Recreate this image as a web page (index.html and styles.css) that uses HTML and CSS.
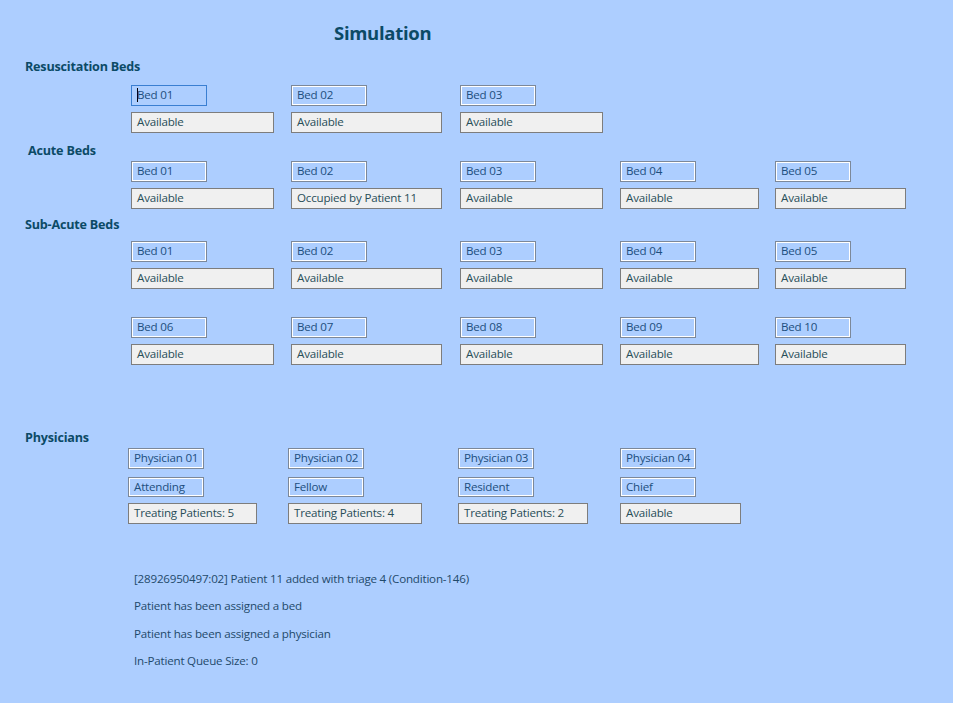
FILE: index.html
```html
<!DOCTYPE html>
<html lang="en">
<head>
<meta charset="utf-8">
<title>Simulation</title>
<link rel="stylesheet" href="styles.css">
</head>
<body>
<main class="sim">
  <h1 class="title">Simulation</h1>

  <h2 class="section">Resuscitation Beds</h2>
  <div class="bed-grid">
    <div class="bed"><div class="box name focused"><span class="caret"></span>Bed 01</div><div class="box status">Available</div></div>
    <div class="bed"><div class="box name">Bed 02</div><div class="box status">Available</div></div>
    <div class="bed"><div class="box name">Bed 03</div><div class="box status">Available</div></div>
  </div>

  <h2 class="section section-acute">Acute Beds</h2>
  <div class="bed-grid grid-tight">
    <div class="bed"><div class="box name">Bed 01</div><div class="box status">Available</div></div>
    <div class="bed"><div class="box name">Bed 02</div><div class="box status">Occupied by Patient 11</div></div>
    <div class="bed"><div class="box name">Bed 03</div><div class="box status">Available</div></div>
    <div class="bed"><div class="box name">Bed 04</div><div class="box status">Available</div></div>
    <div class="bed"><div class="box name">Bed 05</div><div class="box status">Available</div></div>
  </div>

  <h2 class="section section-sub">Sub-Acute Beds</h2>
  <div class="bed-grid grid-sub">
    <div class="bed"><div class="box name">Bed 01</div><div class="box status">Available</div></div>
    <div class="bed"><div class="box name">Bed 02</div><div class="box status">Available</div></div>
    <div class="bed"><div class="box name">Bed 03</div><div class="box status">Available</div></div>
    <div class="bed"><div class="box name">Bed 04</div><div class="box status">Available</div></div>
    <div class="bed"><div class="box name">Bed 05</div><div class="box status">Available</div></div>
    <div class="bed"><div class="box name">Bed 06</div><div class="box status">Available</div></div>
    <div class="bed"><div class="box name">Bed 07</div><div class="box status">Available</div></div>
    <div class="bed"><div class="box name">Bed 08</div><div class="box status">Available</div></div>
    <div class="bed"><div class="box name">Bed 09</div><div class="box status">Available</div></div>
    <div class="bed"><div class="box name">Bed 10</div><div class="box status">Available</div></div>
  </div>

  <h2 class="section section-phys">Physicians</h2>
  <div class="phys-grid">
    <div class="phys"><div class="box name">Physician 01</div><div class="box role">Attending</div><div class="box status">Treating Patients: 5</div></div>
    <div class="phys"><div class="box name">Physician 02</div><div class="box role">Fellow</div><div class="box status">Treating Patients: 4</div></div>
    <div class="phys"><div class="box name">Physician 03</div><div class="box role">Resident</div><div class="box status">Treating Patients: 2</div></div>
    <div class="phys"><div class="box name">Physician 04</div><div class="box role">Chief</div><div class="box status">Available</div></div>
  </div>

  <div class="log">
    <p>[28926950497:02] Patient 11 added with triage 4 (Condition-146)</p>
    <p>Patient has been assigned a bed</p>
    <p>Patient has been assigned a physician</p>
    <p>In-Patient Queue Size: 0</p>
  </div>
</main>
</body>
</html>
```

FILE: styles.css
```css
html, body {
  margin: 0;
  padding: 0;
}

body {
  background: #adceff;
  width: 953px;
  height: 703px;
  overflow: hidden;
  font-family: "Open Sans", "Noto Sans", sans-serif;
  font-size: 11.6px;
  letter-spacing: -0.2px;
}

.sim {
  display: flex;
  flex-direction: column;
  align-items: flex-start;
}

.title {
  margin: 21px 0 0 334px;
  font-size: 18.5px;
  letter-spacing: -0.3px;
  line-height: 24px;
  font-weight: 700;
  color: #0b4a66;
}

.section {
  margin: 14px 0 0 25px;
  font-size: 12.6px;
  letter-spacing: -0.2px;
  line-height: 16px;
  font-weight: 700;
  color: #0b4a66;
}

.section-acute { margin: 10px 0 0 28px; }
.section-sub { margin: 8px 0 0 25px; }
.section-phys { margin: 65px 0 0 25px; }

.bed-grid {
  margin: 10px 0 0 131px;
  display: grid;
  grid-template-columns: 160px 169px 160px 155px 131px;
  row-gap: 28px;
}

.grid-tight { margin-top: 2px; }
.grid-sub { margin-top: 8px; }

.bed {
  display: flex;
  flex-direction: column;
  gap: 6px;
}

.box {
  box-sizing: border-box;
  height: 21px;
  line-height: 18px;
  padding-left: 5px;
  border: 1px solid #7c8899;
  white-space: nowrap;
  overflow: hidden;
}

.name, .role {
  width: 76px;
  background: #adceff;
  color: #1d4f7e;
  box-shadow: inset 0 0 0 1px #ffffff;
}

.name.focused {
  border-color: #3a7fd2;
  box-shadow: none;
}

.caret {
  display: inline-block;
  width: 1px;
  height: 14px;
  margin-right: -1px;
  vertical-align: -3px;
  background: #000;
}

.status {
  background: #f0f0f0;
  color: #284e58;
  border-color: #7d7d7d;
}

.bed:nth-child(5n+1) .status { width: 143px; }
.bed:nth-child(5n+2) .status { width: 151px; }
.bed:nth-child(5n+3) .status { width: 143px; }
.bed:nth-child(5n+4) .status { width: 139px; }
.bed:nth-child(5n+5) .status { width: 131px; }

.phys-grid {
  margin: 2px 0 0 128px;
  display: grid;
  grid-template-columns: 160px 170px 162px 121px;
}

.phys {
  display: flex;
  flex-direction: column;
}

.phys .role { margin-top: 8px; height: 20px; }
.phys .status { margin-top: 6px; }

.phys:nth-child(1) .status { width: 129px; }
.phys:nth-child(2) .status { width: 134px; }
.phys:nth-child(3) .status { width: 130px; }
.phys:nth-child(4) .status { width: 121px; }

.log {
  margin: 41px 0 0 134px;
  color: #1f4a6b;
}

.log p {
  margin: 0;
  line-height: 27.4px;
}
```
